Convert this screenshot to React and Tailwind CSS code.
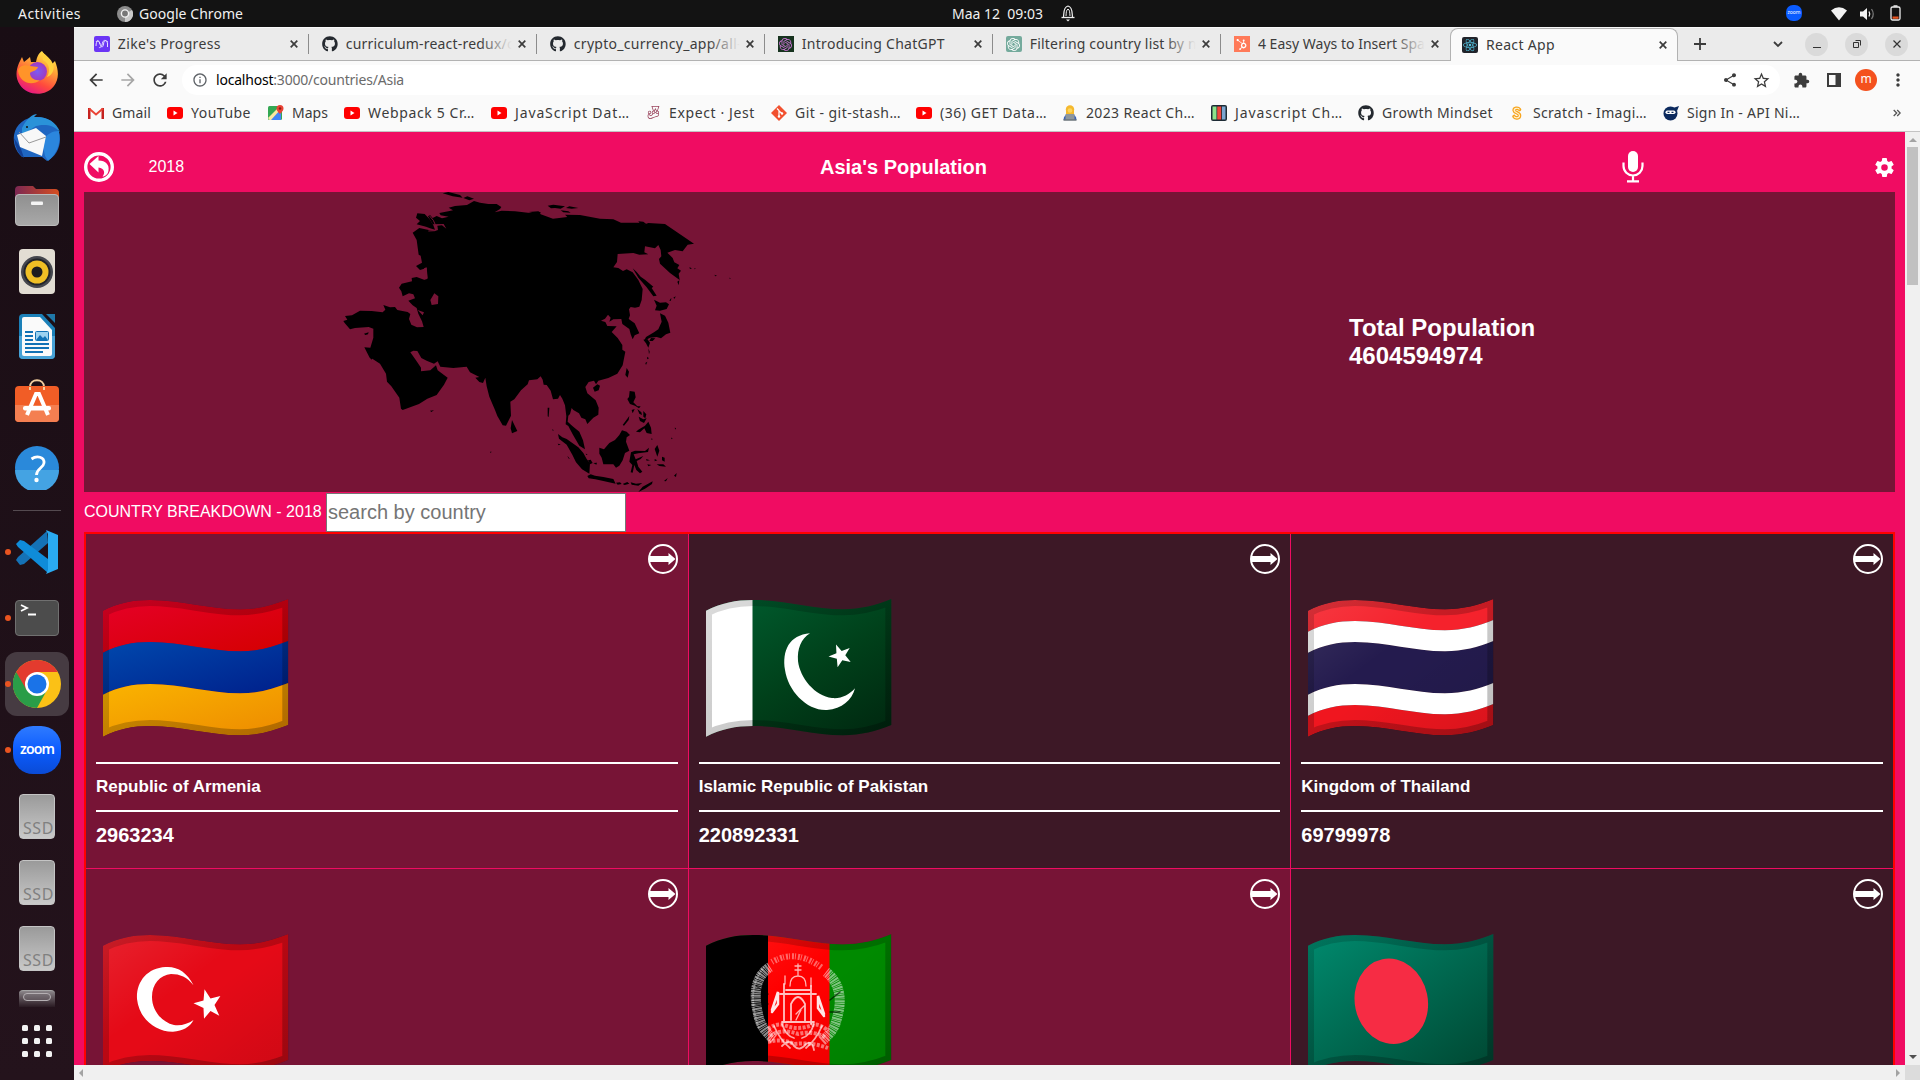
import React, { useLayoutEffect, useRef, useState } from "react";
import { FaGithub, FaHubspot, FaReact } from "react-icons/fa";
import { SiOpenai, SiJest } from "react-icons/si";
import { IoSettingsSharp } from "react-icons/io5";
import {
  MdArrowBack,
  MdArrowForward,
  MdRefresh,
  MdInfoOutline,
  MdShare,
  MdStarBorder,
  MdExtension,
  MdMoreVert,
} from "react-icons/md";

/* Text whose tracking is adjusted so that it fills the given width. */
function Fit({ w, className = "", children }) {
  const ref = useRef(null);
  const [gap, setGap] = useState(0);
  useLayoutEffect(() => {
    const el = ref.current;
    const n = el.textContent.length;
    setGap((w - el.getBoundingClientRect().width) / n);
  }, [w]);
  return (
    <span ref={ref} className={`inline-block whitespace-pre ${className}`} style={{ letterSpacing: gap }}>
      {children}
    </span>
  );
}

const Svg = ({ w, h, vb, className = "", children }) => (
  <svg width={w} height={h} viewBox={vb || `0 0 ${w} ${h}`} fill="none" className={`block shrink-0 ${className}`}>
    {children}
  </svg>
);

/* ---------- top panel ---------- */
function TopPanel() {
  return (
    <div className="flex h-[27px] shrink-0 items-center bg-[#131313] text-[14px] text-[#f0f0f0]">
      <div className="ml-[18px] w-[99px]"><Fit w={63}>Activities</Fit></div>
      <Svg w={16} h={16}>
        <circle cx="8" cy="8" r="8" fill="#8b8b8b" />
        <path d="M8 8L15 4A8 8 0 0 1 8 16Z" fill="#c9c9c9" />
        <circle cx="8" cy="7.500" r="3.600" fill="#777" stroke="#f2f2f2" strokeWidth="1.400" />
      </Svg>
      <div className="ml-1.5 w-[813px]"><Fit w={104}>Google Chrome</Fit></div>
      <div className="w-[108px] pb-px"><Fit w={91}>{"Maa 12  09:03"}</Fit></div>
      <Svg w={16} h={18} className="mb-0.5">
        <path d="M3.500 13C4 10 3 3 8 2c5 1 4 8 4.500 11" stroke="#eee" strokeWidth="1.200" />
        <path d="M6 12c.3-3 0-6 2-7c2 1 1.700 4 2 7" stroke="#eee" strokeWidth="1" />
        <path d="M1.500 13.500h13" stroke="#eee" strokeWidth="1.300" />
        <path d="M6 15.500h4l-2 2z" fill="#eee" />
      </Svg>
      <div className="mb-px ml-[710px] flex h-4 w-4 items-center justify-center rounded-[7px] bg-[#0b5cff] text-[5px] text-white">zoom</div>
      <Svg w={16} h={14} className="ml-[29px]"><path d="M0 3.500Q8-3 16 3.500L8 13.500Z" fill="#f2f2f2" /></Svg>
      <Svg w={16} h={14} className="ml-[13px]">
        <path d="M0 4.500h3L7 1v12L3 9.500H0z" fill="#f2f2f2" />
        <path d="M9 4.500Q10.500 7 9 9.500" stroke="#f2f2f2" strokeWidth="1.300" />
        <path d="M11.500 2Q15 7 11.500 12" stroke="#777" strokeWidth="1.300" />
      </Svg>
      <Svg w={11} h={16} className="mb-0.5 ml-[14px]">
        <path d="M3.500 1h4" stroke="#eee" strokeWidth="1.500" />
        <rect x="1" y="2" width="9" height="13" rx="1.500" stroke="#eee" strokeWidth="1.300" />
        <rect x="2.500" y="11.500" width="6" height="2.300" fill="#e95420" />
      </Svg>
    </div>
  );
}

/* ---------- dock ---------- */
const Firefox = () => (
  <Svg w={44} h={44}>
    <defs>
      <linearGradient id="ffa" x1="0.8" y1="0" x2="0.3" y2="1">
        <stop offset="0" stopColor="#fff44f" /><stop offset=".35" stopColor="#ffa436" />
        <stop offset=".7" stopColor="#ff4a3d" /><stop offset="1" stopColor="#e31587" />
      </linearGradient>
      <radialGradient id="ffb"><stop offset="0" stopColor="#7a5cf5" /><stop offset="1" stopColor="#a03ac0" /></radialGradient>
    </defs>
    <path d="M4 13L7 7l2 5q4-3 6-5l1 5h5c1-6 3-9 6-11l5 7c2 1 4 3 5 6l3-3c4 10 4 18-1 25C31 47 12 46 5 35C0 28 1 20 4 13Z" fill="url(#ffa)" />
    <circle cx="22.500" cy="21.500" r="9.500" fill="url(#ffb)" />
    <path d="M3 21c1-5 6-7 12-5l8 1c-1 4-6 4-8 6c0 5 5 8 10 7c-7 6-20 4-22-9Z" fill="#ff9429" />
    <path d="M28 10c6 3 8 10 4 17c6-2 8-9 6-13c-2-5-6-8-11-12Z" fill="#ffd23d" />
  </Svg>
);
const Thunderbird = () => (
  <Svg w={48} h={48}>
    <path d="M24 3C38 3 47 13 47 25c0 10-5 18-13 22l-5-4H9C2 37 0 28 1 21C3 10 12 3 24 3Z" fill="#1f66c1" />
    <path d="M9 14C14 4 20 0 24 0l-3 3c12-1 22 4 26 15c-7-8-17-8-24-6L9 21Z" fill="#2a92d8" />
    <path d="M29 27C34 20 39 17 46 17c2 12-2 23-11 30l-3-5Z" fill="#2b86dd" />
    <path d="M4 21l19-7 10 8-4 20L7 33Z" fill="#f8f8f8" />
    <path d="M6 18l10 11 17-6" stroke="#999" strokeWidth="1" />
    <path d="M1 24q2 15 10 20l-3-9Z" fill="#123f94" />
    <circle cx="14" cy="13" r="1" fill="#111" />
  </Svg>
);
const Files = () => (
  <Svg w={44} h={42}>
    <defs>
      <linearGradient id="fla"><stop stopColor="#7c2853" /><stop offset="1" stopColor="#d64e20" /></linearGradient>
      <linearGradient id="flb" x2="0" y2="1"><stop stopColor="#8f8f8f" /><stop offset="1" stopColor="#a9a9a9" /></linearGradient>
    </defs>
    <path d="M0 5a4 4 0 0 1 4-4h14l3 3h19a4 4 0 0 1 4 4v12H0Z" fill="url(#fla)" />
    <rect x=".5" y="9.500" width="43" height="31" rx="3.500" fill="url(#flb)" stroke="#bbb" />
    <rect x="16" y="16.500" width="12" height="3.500" rx="1" fill="#f4f4f4" />
  </Svg>
);
const Rhythmbox = () => (
  <Svg w={36} h={45}>
    <rect width="36" height="45" rx="4" fill="#e2ddd3" />
    <circle cx="18" cy="23" r="16" fill="#45474e" /><circle cx="18" cy="23" r="13.500" fill="#22242a" />
    <circle cx="18" cy="23" r="11.500" fill="#efbf25" /><circle cx="18" cy="23" r="5.500" fill="#1d1d1f" />
  </Svg>
);
const Writer = () => (
  <Svg w={36} h={45}>
    <path d="M4 0H23L36 14V41a4 4 0 0 1-4 4H4a4 4 0 0 1-4-4V4a4 4 0 0 1 4-4Z" fill="#1b80b8" />
    <path d="M0 22h36v19a4 4 0 0 1-4 4H4a4 4 0 0 1-4-4Z" fill="#47a2d6" />
    <path d="M5 3H21L33 16V40a2 2 0 0 1-2 2H5a2 2 0 0 1-2-2V5a2 2 0 0 1 2-2Z" fill="#fafafa" />
    <path d="M27 0h9v9Z" fill="#1f78a8" />
    <path d="M6 18h8M6 22h8M6 26h8M6 30h24M6 34h24M6 38h18" stroke="#1272b5" strokeWidth="2" />
    <rect x="16.500" y="17.500" width="13" height="9" rx="1" fill="#9dd2f0" stroke="#1272b5" />
    <path d="M17 26l4-5 3 3 2-2 3 4Z" fill="#1272b5" />
  </Svg>
);
const Software = () => (
  <Svg w={44} h={43}>
    <path d="M15 8c0-9 14-9 14 0" stroke="#f3cf9f" strokeWidth="2" />
    <rect y="7" width="44" height="36" rx="4" fill="#f15d26" />
    <path d="M0 26h44v13a4 4 0 0 1-4 4H4a4 4 0 0 1-4-4Z" fill="#f47f51" />
    <path d="M12 36L21 15h3l9 21" stroke="#fff" strokeWidth="4" />
    <rect x="8" y="27" width="28" height="4.500" rx="2" fill="#fff" />
    <path d="M15 8v3M29 8v3" stroke="#f3cf9f" strokeWidth="2" />
  </Svg>
);
const Help = () => (
  <Svg w={44} h={44}>
    <circle cx="22" cy="22" r="22" fill="#2a89da" />
    <path d="M0 24h44a22 22 0 0 1-44 0Z" fill="#44a3e3" />
    <path d="M16.500 13C22 9 29.500 11 29 17c-.5 5-7.500 5.500-7.500 12" stroke="#fff" strokeWidth="2.800" /><circle cx="21.500" cy="34" r="2.200" fill="#fff" />
  </Svg>
);
const Code = () => (
  <Svg w={42} h={44}>
    <path d="M31 1L2 27l-2 3 4 5 4-1L32 13Z" fill="#1572b6" />
    <path d="M0 14l4-4 4 1 24 18v14L2 17Z" fill="#0f8cd9" />
    <path d="M30 0L42 5v34l-12 5 2-4V4Z" fill="#2aabf2" />
  </Svg>
);
const Terminal = () => (
  <Svg w={44} h={36}>
    <rect x=".5" y=".5" width="43" height="35" rx="3.500" fill="#4c4c4c" stroke="#707070" />
    <path d="M6 5l6 3-6 3M13 14.500h8" stroke="#fff" strokeWidth="1.800" />
  </Svg>
);
const Chrome = () => (
  <Svg w={48} h={48}>
    <circle cx="24" cy="24" r="24" fill="#fbc116" />
    <path d="M24 24L3.200 12A24 24 0 0 1 44.800 12Z" fill="#e33b2e" />
    <path d="M3.200 12A24 24 0 0 0 24 48L34 30 24 24Z" fill="#2a9d48" />
    <path d="M24 12h20.800L34 30l-10-6Z" fill="#fbc116" /><path d="M3.200 12h41.600H24v12L13.600 30Z" fill="#e33b2e" />
    <circle cx="24" cy="24" r="12" fill="#fff" /><circle cx="24" cy="24" r="9.500" fill="#1a73e8" />
  </Svg>
);
const Zoom = () => (
  <div className="flex h-12 w-12 items-center justify-center rounded-[20px] bg-linear-to-b from-[#2f7bff] via-[#0b5cff] to-[#0a4bd6]">
    <Fit w={34} className="pb-0.5 text-[14px] leading-4 font-semibold text-white">zoom</Fit>
  </div>
);
const Ssd = () => (
  <div className="flex h-[45px] w-9 items-end justify-end rounded border border-[#c4c4c4] bg-linear-to-b from-[#9a9a9a] to-[#c9c9c9]">
    <Fit w={31} className="text-[16px] leading-[20px] text-[#808080]">SSD</Fit>
  </div>
);

function Dock() {
  const slot = "flex h-[66px] shrink-0 items-center justify-center";
  const Dot = () => <span className="absolute left-[5px] size-1.5 rounded-full bg-[#e95420]" />;
  return (
    <div className="flex w-[74px] shrink-0 flex-col bg-linear-to-b from-[#190d14] to-[#24131c] pt-[12px]">
      <div className={slot}><Firefox /></div>
      <div className={slot}><Thunderbird /></div>
      <div className={`${slot} pt-1`}><Files /></div>
      <div className={`${slot} pt-0.5`}><Rhythmbox /></div>
      <div className={slot}><Writer /></div>
      <div className={`${slot} pb-1`}><Software /></div>
      <div className={slot}><Help /></div>
      <div className="mx-[13px] mt-[9px] mb-[8px] h-px shrink-0 bg-[#544a50]" />
      <div className={`${slot} relative`}><Dot /><Code /></div>
      <div className={`${slot} relative`}><Dot /><Terminal /></div>
      <div className={`${slot} relative`}>
        <div className="flex size-16 items-center justify-center rounded-[12px] bg-[#463b42]"><Chrome /></div>
        <Dot />
      </div>
      <div className={`${slot} relative`}><Dot /><Zoom /></div>
      <div className={slot}><Ssd /></div>
      <div className={slot}><Ssd /></div>
      <div className={slot}><Ssd /></div>
      <div className="mx-auto mt-[9px] flex h-[17px] w-9 shrink-0 justify-center rounded-t border-t border-[#a5a5a5] bg-linear-to-b from-[#8b868a] to-[#2a1b23] pt-0.5">
        <div className="h-2 w-7 rounded border border-[#b5b0b3] bg-[#77717566]" />
      </div>
      <div className="mx-auto mt-[18px] grid grid-cols-3 gap-x-1.5 gap-y-[7px]">
        {Array.from({ length: 9 }, (_, i) => <span key={i} className="size-1.5 rounded-[1.5px] bg-[#f2f2f2]" />)}
      </div>
    </div>
  );
}

/* ---------- browser chrome ---------- */
const TabX = () => <Svg w={8} h={8}><path d="M.7.7l6.600 6.600M7.300.7L.7 7.300" stroke="#3c3c3c" strokeWidth="1.700" /></Svg>;

const TABS = [
  { t: "Zike's Progress", w: 103, icon: <div className="flex size-4 items-center justify-center rounded-xs bg-[#6b35f5]"><Svg w={14} h={10}><path d="M1 7C1 1 4 1 5 5S8 9 8.500 5S11 1 13 3M1 3C3 0 4 2 5 5M4 8C5 10 7 7 7.500 4S11 0 12.500 4V8" stroke="#e6dcff" /></Svg></div> },
  { t: "curriculum-react-redux/c", w: 168, fade: true, icon: <FaGithub size={16} color="#24292f" /> },
  { t: "crypto_currency_app/all-", w: 168, fade: true, icon: <FaGithub size={16} color="#24292f" /> },
  { t: "Introducing ChatGPT", w: 143, icon: <div className="flex size-4 items-center justify-center bg-[#17331f]"><SiOpenai size={13} color="#c773d1" /></div> },
  { t: "Filtering country list by n", w: 167, fade: true, icon: <div className="flex size-4 items-center justify-center rounded-xs bg-[#74aa9c]"><SiOpenai size={13} color="#fff" /></div> },
  { t: "4 Easy Ways to Insert Spa", w: 167, fade: true, icon: <div className="flex size-4 items-center justify-center bg-[#ff7a59]"><FaHubspot size={11} color="#fff" /></div> },
  { t: "React App", w: 69, active: true, icon: <div className="flex size-4 items-center justify-center rounded-xs bg-[#20232a]"><FaReact size={14} color="#53c1de" /></div> },
];

function TabStrip() {
  return (
    <div className="flex h-[34px] shrink-0 border-t border-[#f8f8f8] border-b border-b-[#b2b2b2] bg-[#ebebeb] pl-2">
      {TABS.map((tab, i) => (
        <div
          key={tab.t}
          className={
            "flex h-[33px] w-[228px] items-center pb-px " +
            (tab.active ? "rounded-t-lg border-x border-t border-[#b2b2b2] bg-[#fafafa] pr-[10px] pl-[11px]" : "pr-[11px] pl-3")
          }
        >
          {tab.icon}
          <div className="relative ml-2 h-5 w-[168px] overflow-hidden text-[14px] leading-5 text-[#3c3c3c]">
            <Fit w={tab.w}>{tab.t}</Fit>
            {tab.fade && <div className="absolute top-0 right-0 h-5 w-8 bg-linear-to-r from-[#ebebeb00] to-[#ebebeb]" />}
          </div>
          <div className="ml-[6px]"><TabX /></div>
          {i < 5 && <div className="relative left-[10px] h-5 w-px bg-[#8c8c8c]" />}
        </div>
      ))}
      <div className="flex flex-1 items-center">
        <Svg w={12} h={12} className="ml-[16px]"><path d="M6 0v12M0 6h12" stroke="#3c3c3c" strokeWidth="1.800" /></Svg>
        <Svg w={10} h={7} className="ml-[67px]"><path d="M1 1l4 4 4-4" stroke="#3c3c3c" strokeWidth="1.800" /></Svg>
        <div className="ml-[22px] flex gap-[17px]">
          <div className="flex size-[23px] items-center justify-center rounded-full bg-[#dadada]"><div className="mt-1.5 h-px w-2 bg-[#333]" /></div>
          <div className="flex size-[23px] items-center justify-center rounded-full bg-[#dadada]">
            <Svg w={8} h={8}><path d="M.5 2.500h5v5h-5zM2.500.5h5v5" stroke="#333" /></Svg>
          </div>
          <div className="flex size-[23px] items-center justify-center rounded-full bg-[#dadada]">
            <Svg w={8} h={8}><path d="M.5.5l7 7M7.500.5l-7 7" stroke="#333" strokeWidth="1.200" /></Svg>
          </div>
        </div>
      </div>
    </div>
  );
}

function Toolbar() {
  return (
    <div className="flex h-[38px] shrink-0 items-center bg-[#fafafa] text-[#3c3c3c]">
      <MdArrowBack size={20} className="ml-[12px]" />
      <MdArrowForward size={20} className="ml-[12px] text-[#a6a6a6]" />
      <MdRefresh size={20} className="ml-[12px]" />
      <div className="ml-[12px] flex h-[30px] w-[1598px] items-center rounded-full bg-white">
        <MdInfoOutline size={16} className="ml-[10px] text-[#5f6368]" />
        <Fit w={188} className="ml-2 pb-px text-[14px] text-[#6b6b6b]"><span className="text-black">localhost</span>:3000/countries/Asia</Fit>
        <MdShare size={16} className="ml-auto" />
        <MdStarBorder size={19} className="mr-[9px] ml-[14px]" />
      </div>
      <MdExtension size={17} className="ml-[13px]" />
      <Svg w={14} h={14} className="ml-[17px]"><path d="M1 1h12v12H1z" stroke="#3c3c3c" strokeWidth="2" /><path d="M8.500 1H13v12H8.500z" fill="#3c3c3c" /></Svg>
      <div className="ml-[14px] flex size-[22px] items-center justify-center rounded-full bg-[#f4511e] pb-0.5 text-[12px] text-white">m</div>
      <MdMoreVert size={20} className="ml-[11px]" />
    </div>
  );
}

const YT = () => <Svg w={16} h={12}><rect width="16" height="12" rx="3" fill="#f00" /><path d="M6.500 3.500v5L10.500 6z" fill="#fff" /></Svg>;
const Gmail = () => <Svg w={16} h={12}><path d="M0 1h2.500v11H0z" fill="#c5221f" /><path d="M13.500 1H16v11h-2.500z" fill="#c5221f" /><path d="M1 1.500l7 6 7-6" stroke="#ea4335" strokeWidth="2" /></Svg>;
const Maps = () => <Svg w={16} h={16}><rect y="1" width="14" height="14" rx="1.500" fill="#34a853" /><path d="M2 15L13 4v11z" fill="#4285f4" /><path d="M0 13L11 2l2 2L3 15H1.500z" fill="#fbe9a0" /><path d="M12 0a3.500 3.500 0 0 1 3.500 3.500C15.500 6 12 9 12 9S8.500 6 8.500 3.500A3.500 3.500 0 0 1 12 0z" fill="#ea4335" /><circle cx="12" cy="3.500" r="1.200" fill="#8c1a12" /></Svg>;
const Git = () => <Svg w={16} h={16}><path d="M8 0l8 8-8 8-8-8z" fill="#f1502f" /><path d="M6 3.500l2 2v6M8 6l3 2.500" stroke="#fff" strokeWidth="1.200" /><circle cx="8" cy="11.500" r="1.200" fill="#fff" /><circle cx="11" cy="8.500" r="1.200" fill="#fff" /></Svg>;
const Coder = () => <Svg w={16} h={16}><circle cx="8" cy="4.500" r="4.200" fill="#f5b92e" /><path d="M4 4h8v6H4z" fill="#f5b92e" /><circle cx="8" cy="5.500" r="2.300" fill="#fbd55f" /><path d="M1.500 15q0-6 6.500-6t6.500 6z" fill="#3a62b9" /><rect x="3.500" y="9" width="9" height="6" fill="#8e979e" /><path d="M1.500 15h13" stroke="#6b747b" strokeWidth="1.500" /></Svg>;
const Books = () => <Svg w={16} h={16}><rect width="16" height="16" rx="2" fill="#1d2b35" /><path d="M1.500 1.500h4v13h-4z" fill="#8de38b" /><path d="M6.200 1.500h4v13h-4z" fill="#f0483e" /><path d="M11 1.500h3.500v13H11z" fill="#7ba6d0" /></Svg>;
const Scratch = () => <Svg w={16} h={16}><path d="M10.500 4.500C9 2.500 5 3 5.200 5.500C5.500 8 10.500 7.500 10.500 10.500C10.500 13.500 6 13.500 5 11.500" stroke="#f7a41d" strokeWidth="3.600" strokeLinecap="round" /><path d="M10.500 4.500C9 2.500 5 3 5.200 5.500C5.500 8 10.500 7.500 10.500 10.500C10.500 13.500 6 13.500 5 11.500" stroke="#fff3d6" strokeWidth="1.200" /></Svg>;
const Ninja = () => <Svg w={16} h={16}><circle cx="7.500" cy="8.500" r="7" fill="#0c2a5e" /><path d="M10 3l6-2-2 5z" fill="#0c2a5e" /><rect x="2.500" y="5.500" width="10" height="3.500" rx="1.700" fill="#fff" /><path d="M4.500 7.300h2M8.500 7.300h2" stroke="#0c2a5e" strokeWidth="1.200" /></Svg>;

const BOOKMARKS = [
  { t: "Gmail", w: 39, cell: "w-[79px]", icon: <Gmail /> },
  { t: "YouTube", w: 60, cell: "w-[101px]", icon: <YT /> },
  { t: "Maps", w: 36, cell: "w-[76px]", icon: <Maps /> },
  { t: "Webpack 5 Cr…", w: 107, cell: "w-[147px]", icon: <YT /> },
  { t: "JavaScript Dat…", w: 115, cell: "w-[154px]", icon: <YT /> },
  { t: "Expect · Jest", w: 86, cell: "w-[126px]", icon: <SiJest size={13} color="#99425b" className="mx-[1.5px]" /> },
  { t: "Git - git-stash…", w: 106, cell: "w-[145px]", icon: <Git /> },
  { t: "(36) GET Data…", w: 107, cell: "w-[146px]", icon: <YT /> },
  { t: "2023 React Ch…", w: 109, cell: "w-[149px]", icon: <Coder /> },
  { t: "Javascript Ch…", w: 108, cell: "w-[147px]", icon: <Books /> },
  { t: "Growth Mindset", w: 111, cell: "w-[151px]", icon: <FaGithub size={16} color="#24292f" /> },
  { t: "Scratch - Imagi…", w: 114, cell: "w-[154px]", icon: <Scratch /> },
  { t: "Sign In - API Ni…", w: 113, cell: "w-[227px]", icon: <Ninja /> },
];

function Bookmarks() {
  return (
    <div className="flex h-[33px] shrink-0 items-center border-b border-[#c4c4c4] bg-[#fafafa] pb-[5px] pl-[14px] text-[14px] text-[#3c3c3c]">
      {BOOKMARKS.map((b) => (
        <div key={b.t} className={`flex shrink-0 items-center gap-2 ${b.cell}`}>
          {b.icon}
          <Fit w={b.w} className="pb-px">{b.t}</Fit>
        </div>
      ))}
      <Svg w={8} h={8} className="ml-[3px]"><path d="M.7 1l3 3-3 3M4.200 1l3 3-3 3" stroke="#555" strokeWidth="1.300" /></Svg>
    </div>
  );
}

/* ---------- page ---------- */
const AsiaMap = () => (
  <Svg w={430} h={300} vb="0 21 1290 900" className="ml-[236px]">
    <path
      fill="#000"
      d="M278 143L298 129L330 136L345 138L354 135L352 122L366 121L379 131L371 117L338 118L331 106L324 94L330 90L338 99L350 93L366 100L386 95L362 91L358 84L385 79L399 76L386 68L405 63L441 60L462 48L480 53L505 57L530 57L544 66L540 72L524 82L545 77L585 79L630 84L659 82L662 88L699 101L742 96L735 89L780 90L800 94L840 101L880 103L903 113L955 113L975 118L985 114L1035 117L1122 176L1103 179L1088 199L1065 195L1042 203L1058 219L1063 232L1078 240L1072 250L1083 257L1076 266L1079 285L1050 264L1020 236L1017 222L1024 214L1022 195L1015 180L1005 190L975 184L973 202L985 208L958 209L940 204L893 207L891 231L880 247L895 249L909 258L920 253L938 262L955 285L968 312L965 345L958 365L945 368L932 366L927 373L930 391L926 402L944 415L958 445L944 451L938 463L932 448L928 432L907 417L904 402L880 403L868 410L872 398L864 389L855 401L843 407L856 411L862 423L890 424L875 441L893 459L907 480L907 494L916 500L908 541L892 566L865 579L835 587L828 598L822 587L806 591L796 606L802 625L827 646L836 668L835 689L820 698L802 717L796 703L784 698L777 685L760 675L755 669L750 687L745 692L743 710L757 723L778 740L789 766L795 793L778 782L758 748L745 723L737 718L739 694L735 661L727 641L720 630L714 641L699 643L692 617L680 600L671 599L668 584L662 574L652 583L627 586L623 598L603 616L583 643L571 650L573 692L558 722L548 721L532 693L525 675L508 635L500 604L496 578L489 594L478 591L466 578L478 576L450 562L440 545L400 549L361 545L353 529L342 536L320 527L304 519L292 498L280 497L271 502L292 532L303 548L303 559L331 556L348 541L353 556L383 578L372 599L350 630L322 641L297 657L248 675L243 671L238 638L214 604L201 590L198 566L180 536L157 521L149 518L133 487L151 488L160 458L160 431L146 426L105 429L90 433L74 414L70 408L82 404L75 393L96 391L120 377L155 378L188 382L196 374L190 360L210 367L225 366L232 375L263 381L271 387L267 402L274 419L291 427L311 426L306 409L295 386L290 369L278 361L265 347L285 340L280 328L267 325L248 334L244 319L237 308L245 296L276 289L275 279L290 276L312 284L322 282L320 249L300 255L288 243L306 233L302 212L296 209L290 165Z"
    />
    <path d="M331 345L343 325L355 334L354 357L335 360ZM293 375L312 382L308 391ZM312 250L320 247L323 280L312 284L318 268Z" fill="#771436" />
    <g fill="#000">
      <path d="M292 85L314 87L329 103L340 121L345 134L330 130L318 125L290 118L300 108L288 98Z" />
      <path d="M368 25L385 21L420 30L428 38L398 34ZM430 39L442 34L462 41L448 46Z" />
      <path d="M683 62L700 59L735 64L722 71L705 69L693 70ZM738 69L748 64L775 69L755 71ZM722 76L745 79L752 83L730 82ZM625 81L655 79L664 84L640 85ZM955 109L970 110L983 120L960 116Z" />
      <path d="M938 250L950 261L962 275L975 284L1000 305L995 309L1010 332L1000 334L980 307L955 278Z" />
      <path d="M1002 344L1020 353L1038 352L1047 358L1040 372L1020 377L1005 376L1010 362Z" />
      <path d="M1020 385L1035 392L1045 413L1051 443L1038 448L1023 460L1010 456L990 458L972 468L978 456L1002 442L1015 433L1025 410Z" />
      <path d="M970 464L982 462L990 473L985 488L978 475ZM993 459L1006 460L998 468L988 468ZM985 490L989 500L987 508ZM982 515L987 520L981 523ZM976 534L982 530L978 540ZM1048 347L1054 338L1053 347ZM1060 338L1067 334L1064 341ZM1072 290L1078 286L1076 301Z" />
      <path d="M1108 247L1116 250L1110 252ZM1122 250L1128 251L1124 253ZM1183 269L1191 272L1186 274ZM1228 278L1233 280L1229 281Z" />
      <path d="M132 446L146 442L144 448L136 450ZM150 518L158 500L162 514L154 524Z" />
      <path d="M920 549L927 560L923 578L916 570ZM819 608L832 598L840 602L836 616L824 620ZM576 705L592 738L576 745L572 730ZM683 668L688 668L686 696L683 694ZM330 677L342 676L334 681ZM696 733L701 735L699 738ZM510 800L515 800L512 804Z" />
      <path d="M929 618L944 620L947 637L940 652L952 664L962 664L957 670L945 662L930 657L922 642L927 636ZM935 675L944 672L938 685ZM952 672L964 682L966 690L958 686ZM970 678L979 688L976 700L970 695ZM956 695L970 703L980 700L972 714L960 708ZM908 720L928 693L926 705L912 722ZM955 734L975 722L985 710L993 728L995 747L980 744L973 730L960 742L948 740Z" />
      <path d="M838 788L852 793L868 774L885 765L898 750L906 736L920 740L930 750L920 757L918 770L928 797L915 804L908 826L898 842L888 848L880 838L850 838L845 818L838 806Z" />
      <path d="M714 747L727 757L740 762L775 787L790 804L800 822L810 835L808 866L786 853L768 832L757 809L740 779L717 761Z" />
      <path d="M802 873L812 868L825 872L850 876L880 882L887 896L850 888L826 883L806 880ZM888 893L900 892L905 897L893 899ZM908 897L922 891L928 896L914 900ZM932 892L948 896L967 894L955 902L935 899ZM955 921L968 905L998 889L996 897L975 911Z" />
      <path d="M933 802L945 797L975 798L987 788L984 801L955 805L941 808L947 823L970 813L962 822L950 828L955 845L967 860L960 865L949 855L943 840L938 863L932 862L937 840L928 830Z" />
      <path d="M1004 792L1012 780L1018 797L1012 815ZM1010 838L1030 838L1038 845L1018 843ZM982 838L994 840L985 844ZM978 822L990 826L980 827ZM1004 822L1012 826L1004 829ZM1026 815L1034 818L1034 830L1026 826ZM1032 888L1043 879L1038 889ZM1062 872L1070 864L1068 876ZM1064 728L1068 729L1066 734ZM1053 758L1058 759L1055 763ZM994 760L998 762L995 766ZM804 826L812 824L818 834L810 838ZM820 834L831 833L829 839ZM713 776L722 778L716 781ZM742 812L750 822L745 820ZM797 806L803 808L799 810Z" />
    </g>
    <path d="M328 92L340 106L350 128L345 137L325 138" stroke="#771436" strokeWidth="3" />
  </Svg>
);

const TOP = "M0 11.700C15 4 30 1 47 1C80 1 105 10.300 137 10.300C155 10.300 170 6 185.300 0";
const Band = ({ y, h, c }) => (
  <path transform={`translate(0 ${y})`} d={`${TOP}V${h}C170 ${h + 6} 155 ${h + 10.3} 137 ${h + 10.3}C105 ${h + 10.3} 80 ${h + 1} 47 ${h + 1}C30 ${h + 1} 15 ${h + 4} 0 ${h + 11.7}Z`} fill={c} />
);
const STAR = "M0-1L.235-.324.951-.309.38.124.588.809 0 .4-.588.809-.38.124-.951-.309-.235-.324Z";

function Flag({ id, children }) {
  const outline = "M0 11.700C15 4 30 1 47 1C80 1 105 10.300 137 10.300C155 10.300 170 6 185.300 0V126C170 132 155 136.300 137 136.300C105 136.300 80 127 47 127C30 127 15 130 0 137.700Z";
  return (
    <Svg w={186} h={138}>
      <defs>
        <clipPath id={`c-${id}`}><path d={outline} /></clipPath>
        <linearGradient id={`g-${id}`} x1="0" y1="0" x2="1" y2="1">
          <stop offset="0" stopColor="#fff" stopOpacity=".1" /><stop offset=".4" stopColor="#fff" stopOpacity="0" />
          <stop offset=".5" stopColor="#000" stopOpacity="0" /><stop offset="1" stopColor="#000" stopOpacity=".1" />
        </linearGradient>
        <linearGradient id={`e-${id}`} x1="0" y1="0" x2="1" y2="1">
          <stop offset="0" stopOpacity=".14" /><stop offset="1" stopOpacity=".26" />
        </linearGradient>
      </defs>
      <g clipPath={`url(#c-${id})`}>
        {children}
        <path d={outline} stroke={`url(#e-${id})`} strokeWidth="12" />
      </g>
    </Svg>
  );
}
const Shade = ({ id }) => <rect width="186" height="138" fill={`url(#g-${id})`} />;

const Armenia = () => (
  <Flag id="am">
    <defs>
      <linearGradient id="am1" x2="1" y2="1"><stop stopColor="#e60028" /><stop offset="1" stopColor="#d40000" /></linearGradient>
      <linearGradient id="am2" x2="1" y2="1"><stop stopColor="#0048ad" /><stop offset="1" stopColor="#001f8a" /></linearGradient>
      <linearGradient id="am3" x2="1" y2="1"><stop stopColor="#fab400" /><stop offset="1" stopColor="#ed8a00" /></linearGradient>
    </defs>
    <Band y={0} h={42} c="url(#am1)" /><Band y={42} h={42} c="url(#am2)" /><Band y={84} h={42} c="url(#am3)" />
  </Flag>
);
const Pakistan = () => (
  <Flag id="pk">
    <defs><linearGradient id="pkg" x1=".2" y1="0" x2="1" y2="1"><stop stopColor="#005a2d" /><stop offset=".5" stopColor="#00401a" /><stop offset="1" stopColor="#00260f" /></linearGradient></defs>
    <rect width="186" height="138" fill="url(#pkg)" /><rect width="46.500" height="138" fill="#fff" />
    <path d="M104 34.300C83 36 76 52 79 71C82 92 101 112 121 111C136 110 146 101 149 89.300C143 96 135 100 126 99C109 97 94 79 92 62C91 50 95 40 104 34.300Z" fill="#fff" />
    <path transform="translate(134.500 56.700) rotate(-22) scale(12)" d={STAR} fill="#fff" />
  </Flag>
);
const Thailand = () => (
  <Flag id="th">
    <Band y={0} h={21} c="#f5222c" /><Band y={42} h={42} c="#241b4e" /><Band y={105} h={21} c="#f0161f" /><Shade id="th" />
    <Band y={21} h={21} c="#fff" /><Band y={84} h={21} c="#fff" />
  </Flag>
);
const Turkey = () => (
  <Flag id="tr">
    <Band y={0} h={126} c="#e50a17" /><Shade id="tr" />
    <path d="M90.500 51.300C84 38 74 32 62.500 33C44 34 33 48 34 65C36 85 53 98 70 97.700C80 97 87 93 90.500 86C85 90 78 92 71 91C58 88 49 76 49 63C49 50 57 41 68 40C77 40 84 43 90.500 51.300Z" fill="#fff" />
    <path d="M101.500 55.300L107.500 64.500L117.400 62L111.500 71L116.300 81.700L107.500 77L101 84.700L100.500 74L90.500 69.300L100.500 66.500Z" fill="#fff" />
  </Flag>
);
const Afghanistan = () => (
  <Flag id="af">
    <Band y={0} h={126} c="#008a00" /><rect x="62" width="61.500" height="138" fill="#f00" /><Shade id="af" /><rect width="62" height="138" fill="#000" />
    <g stroke="#fff" strokeLinecap="round">
      <path d="M64 33C50 42 47 58 52 80C54 91 60 99 68 105" strokeWidth="10" strokeOpacity=".55" strokeDasharray="1 .8 2 .6" strokeLinecap="butt" />
      <path d="M58 33C46 48 43 66 53 95" strokeWidth="2" strokeOpacity=".4" strokeDasharray="1.500 1" strokeLinecap="butt" />
      <path d="M120 38C133 48 137 64 131 84C129 94 124 100 116 107" strokeWidth="10" strokeOpacity=".5" strokeDasharray="1 .8 2 .6" strokeLinecap="butt" />
      <path d="M66 28Q90 14 116 34" strokeWidth="6" strokeOpacity=".4" strokeDasharray="1 2 2 1" strokeLinecap="butt" />
      <path d="M50 52l12 8M50 70h12M124 66l10-8M124 78h10" stroke="#000" strokeOpacity=".6" strokeWidth="1.500" />
      <path d="M78 88V50M105 90V52M76 88h32M74 60h36M80 56h24M85 86V70q7-14 14 0v18" strokeWidth="1.800" strokeOpacity=".75" />
      <path d="M84 52q0-10 8-10t8 10M92 42V30M89 32h6M89 36h6M79 50v-8M105 52v-8M90 80l8-8M90 86l5-10" strokeWidth="1.300" strokeOpacity=".7" />
      <path d="M66 76l6-18v12l-6 8M118 80l-6-18v12l6 8" strokeWidth="2.500" strokeOpacity=".9" />
      <path d="M62 95q8-6 16-4q14 6 28 0q8-2 16 6M64 102q12-8 28-2q16-4 28 4M62 108q14-4 26 2q18-2 34 4" strokeWidth="4" strokeOpacity=".45" strokeDasharray="3 1.500" strokeLinecap="butt" />
      <path d="M68 92q6 14 16 22M76 90q4 12 12 14M116 92q-6 14-16 22M108 90q-4 12-12 14M76 112q8-8 12 0q6 6 12-2q6-4 8 6" strokeWidth="1.800" strokeOpacity=".65" />
    </g>
  </Flag>
);
const Bangladesh = () => (
  <Flag id="bd">
    <defs><linearGradient id="bdg" x2="1" y2="1"><stop stopColor="#008a6e" /><stop offset="1" stopColor="#004631" /></linearGradient></defs>
    <rect width="186" height="138" fill="url(#bdg)" />
    <ellipse cx="83.300" cy="67.300" rx="36.500" ry="43" transform="rotate(-12 83.300 67.300)" fill="#f62c44" />
  </Flag>
);

const CARDS = [
  { name: "Republic of Armenia", pop: "2963234", bg: "bg-[#771436]", flag: <Armenia /> },
  { name: "Islamic Republic of Pakistan", pop: "220892331", bg: "bg-[#3d1826]", flag: <Pakistan /> },
  { name: "Kingdom of Thailand", pop: "69799978", bg: "bg-[#3d1826]", flag: <Thailand /> },
  { bg: "bg-[#771436]", flag: <Turkey /> },
  { bg: "bg-[#771436]", flag: <Afghanistan /> },
  { bg: "bg-[#3d1826]", flag: <Bangladesh /> },
];

const Card = ({ name, pop, bg, flag }) => (
  <div className={`flex h-[334px] flex-col p-[10px] ${bg}`}>
    <Svg w={30} h={30} className="self-end">
      <circle cx="15" cy="15" r="14" stroke="#fff" strokeWidth="2" />
      <path d="M2 12h18.500V9l7 6-7 6v-3H2z" fill="#fff" />
    </Svg>
    <div className="mt-[25px] ml-[7px] h-[163px] shrink-0">{flag}</div>
    {name && (
      <>
        <div className="flex h-[50px] shrink-0 items-center border-y-2 border-white text-[17px] font-bold">{name}</div>
        <div className="mt-[12px] text-[20px] leading-[23px] font-bold">{pop}</div>
      </>
    )}
  </div>
);

function Page() {
  return (
    <div className="flex min-w-0 flex-1 flex-col overflow-hidden bg-[#f00c62] px-[10px] font-['Liberation_Sans',Arial,sans-serif] text-white">
      <div className="flex h-[60px] shrink-0 items-center pt-[10px]">
        <Svg w={30} h={30}>
          <circle cx="15" cy="15" r="13.300" stroke="#fff" strokeWidth="3.400" />
          <path d="M5.500 12L14.500 4v4.500C22 8.500 25.500 13 24.500 18.500C24 22 21.500 24.500 18.500 24.500C21.500 21 20.500 16 14.500 15.500V20.500Z" fill="#fff" />
        </Svg>
        <div className="ml-[34.500px] w-[671.500px] text-[16px]">2018</div>
        <div className="w-[802px] text-[20px] font-bold">Asia's Population</div>
        <Svg w={22} h={32}>
          <rect x="6" y="0" width="10" height="21" rx="5" fill="#fff" />
          <path d="M1.500 11.500v3.500a9.500 9.500 0 0 0 19 0v-3.500M11 24.500v5.500M5 30.300h12" stroke="#fff" strokeWidth="2.200" />
        </Svg>
        <IoSettingsSharp size={21} className="ml-auto" />
      </div>
      <div className="flex h-[300px] shrink-0 items-center bg-[#771436]">
        <AsiaMap />
        <div className="ml-[599px] text-[24px] leading-[28px] font-bold">
          <div>Total Population</div>
          <div>4604594974</div>
        </div>
      </div>
      <div className="flex h-[40px] shrink-0 items-start">
        <div className="w-[242px] pt-[8px] text-[16px] whitespace-nowrap">COUNTRY BREAKDOWN - 2018</div>
        <input className="mt-px h-[39px] w-[300px] border border-[#767676] bg-white px-px text-[20px] text-black placeholder:text-[#757575]" placeholder="search by country" />
      </div>
      <div className="grid shrink-0 grid-cols-3 gap-px border-2 border-[#f00]">
        {CARDS.map((c, i) => <Card key={i} {...c} />)}
      </div>
    </div>
  );
}

export default function App() {
  return (
    <div className="flex h-[1080px] w-[1920px] flex-col overflow-hidden font-['Noto_Sans',sans-serif]">
      <TopPanel />
      <div className="flex min-h-0 flex-1">
        <Dock />
        <div className="flex min-w-0 flex-1 flex-col">
          <TabStrip />
          <Toolbar />
          <Bookmarks />
          <div className="flex min-h-0 flex-1">
            <Page />
            <div className="flex w-[15px] flex-col items-center bg-[#f0f0f0]">
              <Svg w={8} h={4} className="mt-[6px]"><path d="M4 0l4 4H0z" fill="#a3a3a3" /></Svg>
              <div className="mt-[5px] h-[138px] w-[11px] bg-[#c1c1c1]" />
              <Svg w={8} h={4} className="mt-auto mb-[6px]"><path d="M0 0h8L4 4z" fill="#505050" /></Svg>
            </div>
          </div>
          <div className="flex h-[15px] shrink-0 items-center bg-[#f0f0f0]">
            <Svg w={4} h={8} className="ml-[5px]"><path d="M4 0v8L0 4z" fill="#a3a3a3" /></Svg>
            <Svg w={4} h={8} className="mr-[5px] ml-auto"><path d="M0 0v8l4-4z" fill="#a3a3a3" /></Svg>
            <div className="h-[15px] w-[15px] bg-[#dcdcdc]" />
          </div>
        </div>
      </div>
    </div>
  );
}
